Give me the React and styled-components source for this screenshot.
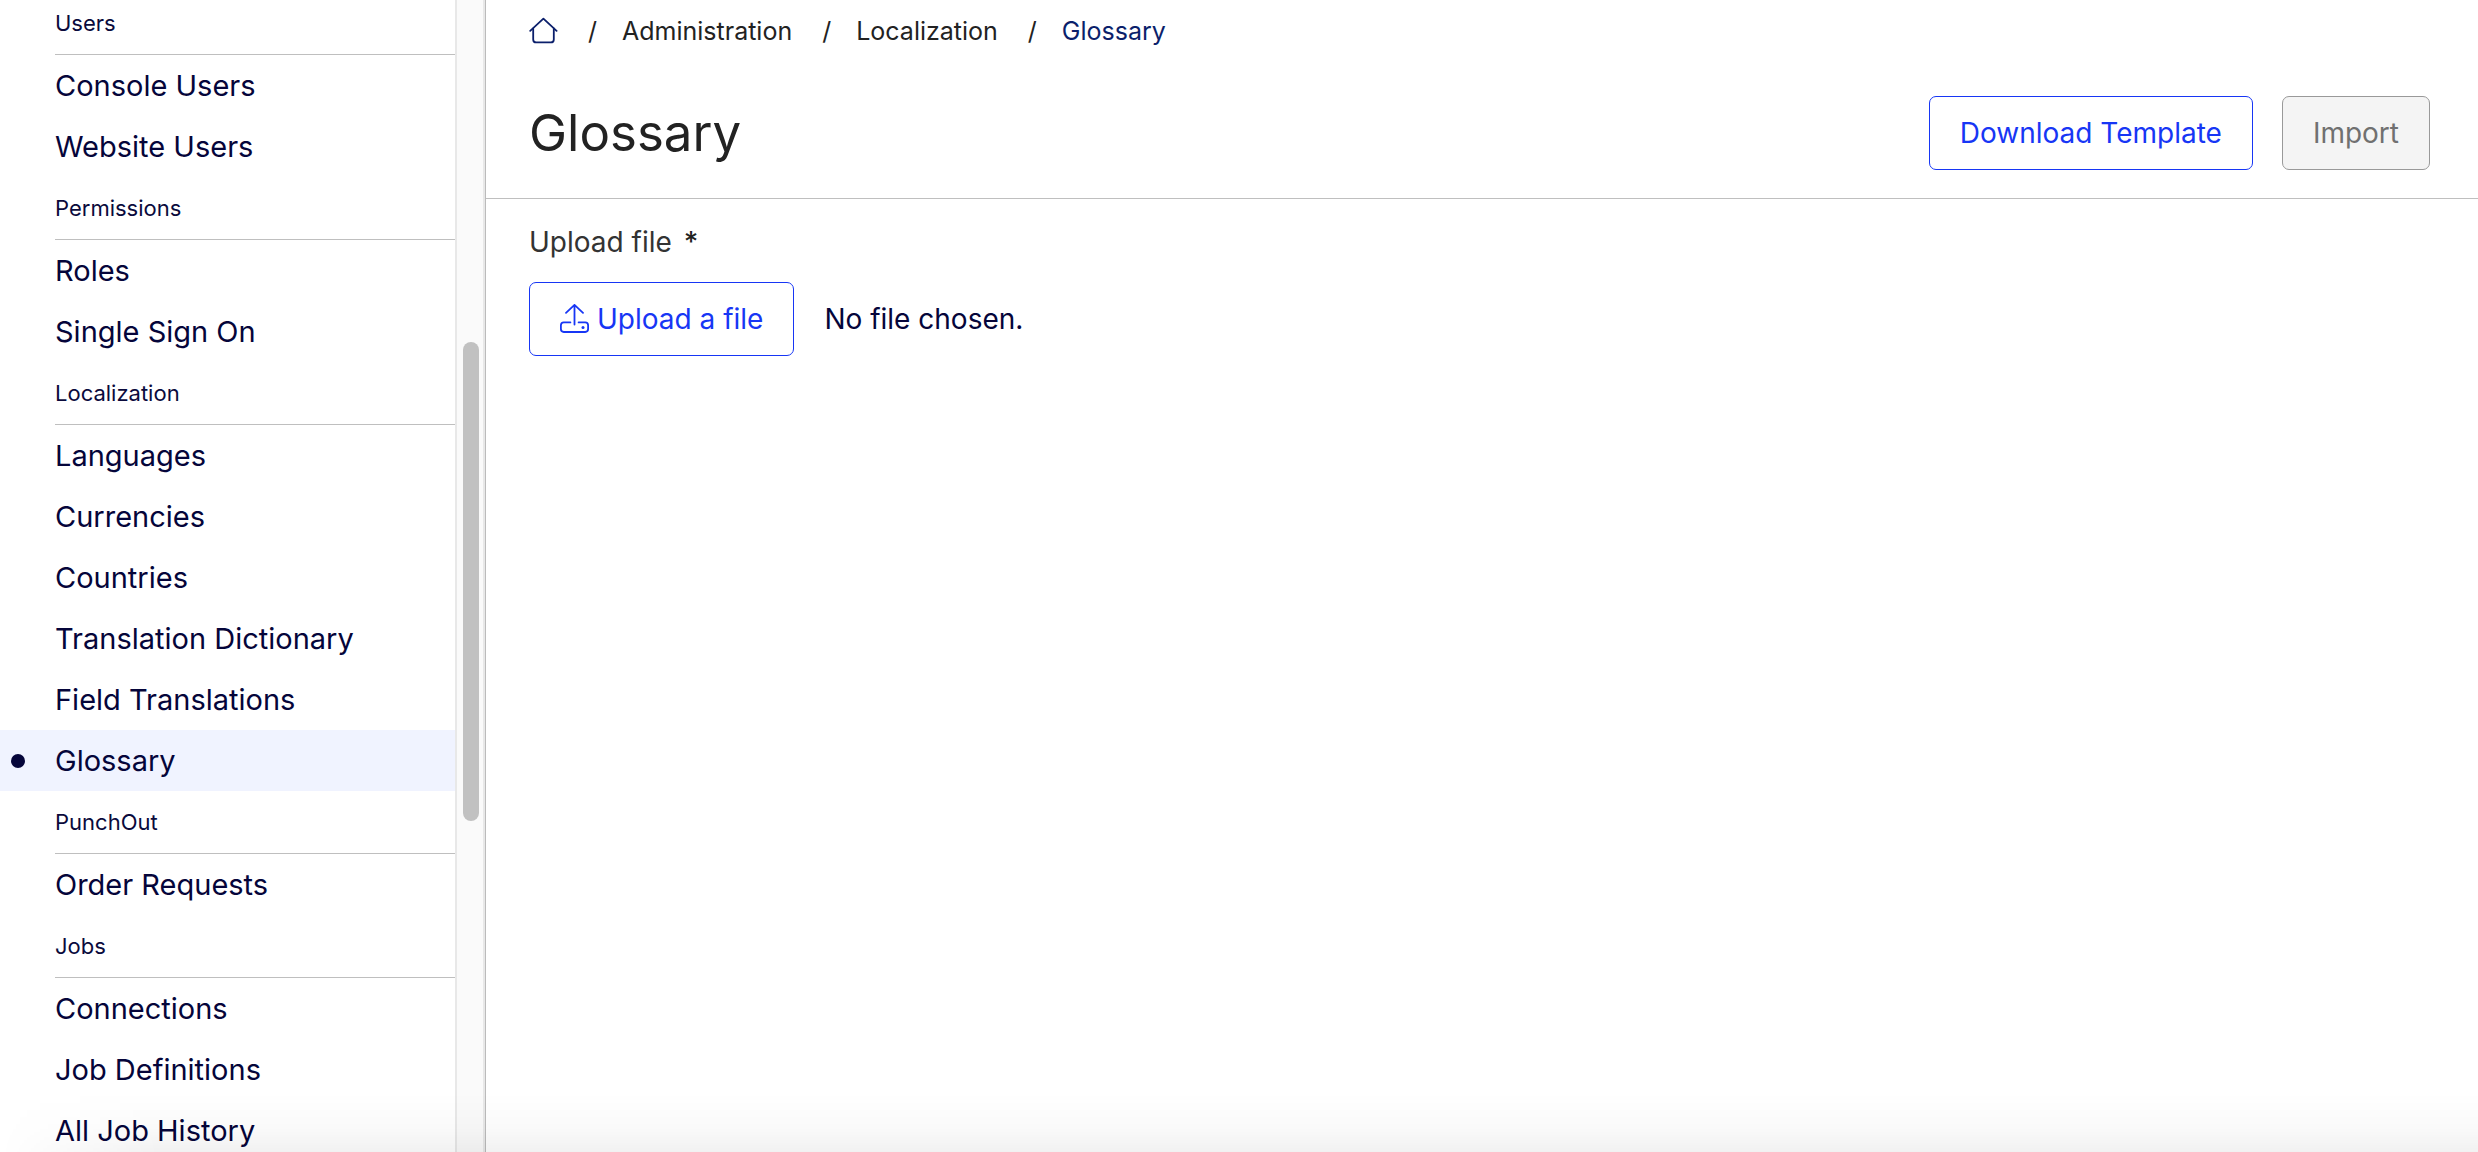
import React, { useRef, useState } from 'react'
import styled, { createGlobalStyle } from 'styled-components'

const GlobalStyle = createGlobalStyle`
    *, *::before, *::after {
        box-sizing: border-box;
    }
    body {
        margin: 0;
        background-color: #fff;
        color: #222;
        font-family: Inter, "Liberation Sans", sans-serif;
        font-optical-sizing: none;
        font-size: 28px;
        line-height: 40px;
    }
`

const Layout = styled.div`
    display: flex;
    height: 100vh;
    overflow: hidden;
`

const Sidebar = styled.aside`
    display: flex;
    flex: none;
    border-right: 1px solid #bbb;
    overflow: hidden;
`

const Nav = styled.nav`
    width: 455px;
    margin-top: -8px;
`

const GroupTitle = styled.h2`
    display: flex;
    align-items: center;
    height: 63px;
    margin: 0 0 0 55px;
    border-bottom: 1px solid #bfbfbf;
    color: #0a0a3c;
    font-size: 22px;
    font-weight: 400;
`

const NavList = styled.ul`
    margin: 0;
    padding: 0;
    list-style: none;
`

const NavLink = styled.a`
    display: flex;
    align-items: center;
    gap: 30px;
    height: 61px;
    padding-left: ${ props => props.$active ? '11px' : '55px' };
    background-color: ${ props => props.$active ? '#f0f3ff' : 'transparent' };
    color: #05053a;
    font-size: 29px;
    text-decoration: none;
`

const Dot = styled.span`
    width: 14px;
    height: 14px;
    border-radius: 50%;
    background-color: #05053a;
`

const ScrollTrack = styled.div`
    width: 30px;
    padding: 342px 0 0 6px;
    border: solid #e8e8e8;
    border-width: 0 2px;
    background-color: #fafafa;
`

const ScrollThumb = styled.div`
    width: 16px;
    height: 479px;
    border-radius: 8px;
    background-color: #c1c1c1;
`

const Main = styled.main`
    flex: 1;
    min-width: 0;
`

const Header = styled.header`
    padding: 10px 48px 28px 43px;
    border-bottom: 1px solid #bfbfbf;
`

const Breadcrumbs = styled.ol`
    display: flex;
    align-items: center;
    height: 42px;
    margin: 0 0 44px;
    padding: 0;
    list-style: none;
    font-size: 25px;
`

const Crumb = styled.li`
    display: flex;
    align-items: center;
    & + &::before {
        content: '/';
        margin: 0 25px 0 30px;
    }
`

const CrumbLink = styled.a`
    display: flex;
    color: ${ props => props.$accent ? '#0b1f6b' : '#222' };
    text-decoration: none;
`

const TitleBar = styled.div`
    display: flex;
    align-items: center;
    justify-content: space-between;
`

const Title = styled.h1`
    margin: 0;
    font-size: 51px;
    font-weight: 400;
    line-height: 74px;
`

const Actions = styled.div`
    display: flex;
    gap: 29px;
`

const Button = styled.button`
    display: flex;
    align-items: center;
    gap: 7px;
    height: 74px;
    padding: 0 30px;
    border: 1px solid #1736f5;
    border-radius: 7px;
    background-color: #fff;
    color: #1736f5;
    font: inherit;
    cursor: pointer;
    &:disabled {
        border-color: #999;
        background-color: #f4f4f4;
        color: #707070;
        cursor: default;
    }
`

const Form = styled.form`
    padding: 23px 43px;
`

const Label = styled.label`
    display: flex;
    gap: 12px;
    margin-bottom: 20px;
    color: #333;
`

const Required = styled.span`
    color: #222;
    font-weight: 500;
`

const FileRow = styled.div`
    display: flex;
    align-items: center;
    gap: 30px;
`

const FileName = styled.span`
    color: #05053a;
`

const BottomFade = styled.div`
    position: fixed;
    right: 0;
    bottom: 0;
    left: 0;
    height: 60px;
    background: linear-gradient(to bottom, rgba(0, 0, 0, 0), rgba(0, 0, 0, 0.02) 60%, rgba(0, 0, 0, 0.055));
    mask-image: linear-gradient(to right, transparent, #000 160px);
    pointer-events: none;
`

const HomeIcon = () => (
    <svg width="29" height="28" viewBox="0 0 29 28" fill="none" stroke="#0b1f6b" strokeWidth="1.8" strokeLinecap="round" strokeLinejoin="round" aria-hidden="true">
        <path d="M1.2 13.8 L14.4 1.6 L27.6 13.8" />
        <path d="M4.2 11.4 V22.4 Q4.2 25.4 7.2 25.4 H21.8 Q24.8 25.4 24.8 22.4 V11.4" />
    </svg>
)

const UploadIcon = () => (
    <svg width="30" height="30" viewBox="0 0 30 30" fill="none" stroke="currentColor" strokeWidth="1.8" strokeLinecap="round" strokeLinejoin="round" aria-hidden="true">
        <path d="M14.5 20.5 V0.9 M6 8.8 L14.5 0.9 L23 8.8" />
        <path d="M10.4 18.4 H3.8 Q0.9 18.4 0.9 21.3 V25.1 Q0.9 28 3.8 28 H25.2 Q28.1 28 28.1 25.1 V21.3 Q28.1 18.4 25.2 18.4 H18.6" />
        <circle cx="23" cy="23.4" r="1.5" fill="currentColor" stroke="none" />
    </svg>
)

const groups = [
    { title: 'Users', items: ['Console Users', 'Website Users'] },
    { title: 'Permissions', items: ['Roles', 'Single Sign On'] },
    { title: 'Localization', items: ['Languages', 'Currencies', 'Countries', 'Translation Dictionary', 'Field Translations', 'Glossary'] },
    { title: 'PunchOut', items: ['Order Requests'] },
    { title: 'Jobs', items: ['Connections', 'Job Definitions', 'All Job History'] },
]

const App = () => {
    const [fileName, setFileName] = useState('')
    const fileInput = useRef(null)

    return (
        <Layout>
            <GlobalStyle />
            <Sidebar>
                <Nav>
                    {
                        groups.map(group => (
                            <section key={ group.title }>
                                <GroupTitle>{ group.title }</GroupTitle>
                                <NavList>
                                    {
                                        group.items.map(item => (
                                            <li key={ item }>
                                                <NavLink href="#" $active={ item === 'Glossary' }>
                                                    { item === 'Glossary' && <Dot /> }
                                                    { item }
                                                </NavLink>
                                            </li>
                                        ))
                                    }
                                </NavList>
                            </section>
                        ))
                    }
                </Nav>
                <ScrollTrack>
                    <ScrollThumb />
                </ScrollTrack>
            </Sidebar>

            <Main>
                <Header>
                    <Breadcrumbs>
                        <Crumb><CrumbLink href="#" aria-label="Home"><HomeIcon /></CrumbLink></Crumb>
                        <Crumb><CrumbLink href="#">Administration</CrumbLink></Crumb>
                        <Crumb><CrumbLink href="#">Localization</CrumbLink></Crumb>
                        <Crumb><CrumbLink href="#" $accent>Glossary</CrumbLink></Crumb>
                    </Breadcrumbs>
                    <TitleBar>
                        <Title>Glossary</Title>
                        <Actions>
                            <Button type="button">Download Template</Button>
                            <Button type="button" disabled>Import</Button>
                        </Actions>
                    </TitleBar>
                </Header>

                <Form>
                    <Label htmlFor="glossary-file">Upload file <Required>*</Required></Label>
                    <FileRow>
                        <Button type="button" onClick={ () => fileInput.current.click() }>
                            <UploadIcon />
                            Upload a file
                        </Button>
                        <input
                            id="glossary-file"
                            type="file"
                            ref={ fileInput }
                            onChange={ event => setFileName(event.target.files[0]?.name || '') }
                            hidden
                        />
                        <FileName>{ fileName || 'No file chosen.' }</FileName>
                    </FileRow>
                </Form>
            </Main>
            <BottomFade />
        </Layout>
    )
}

export default App
